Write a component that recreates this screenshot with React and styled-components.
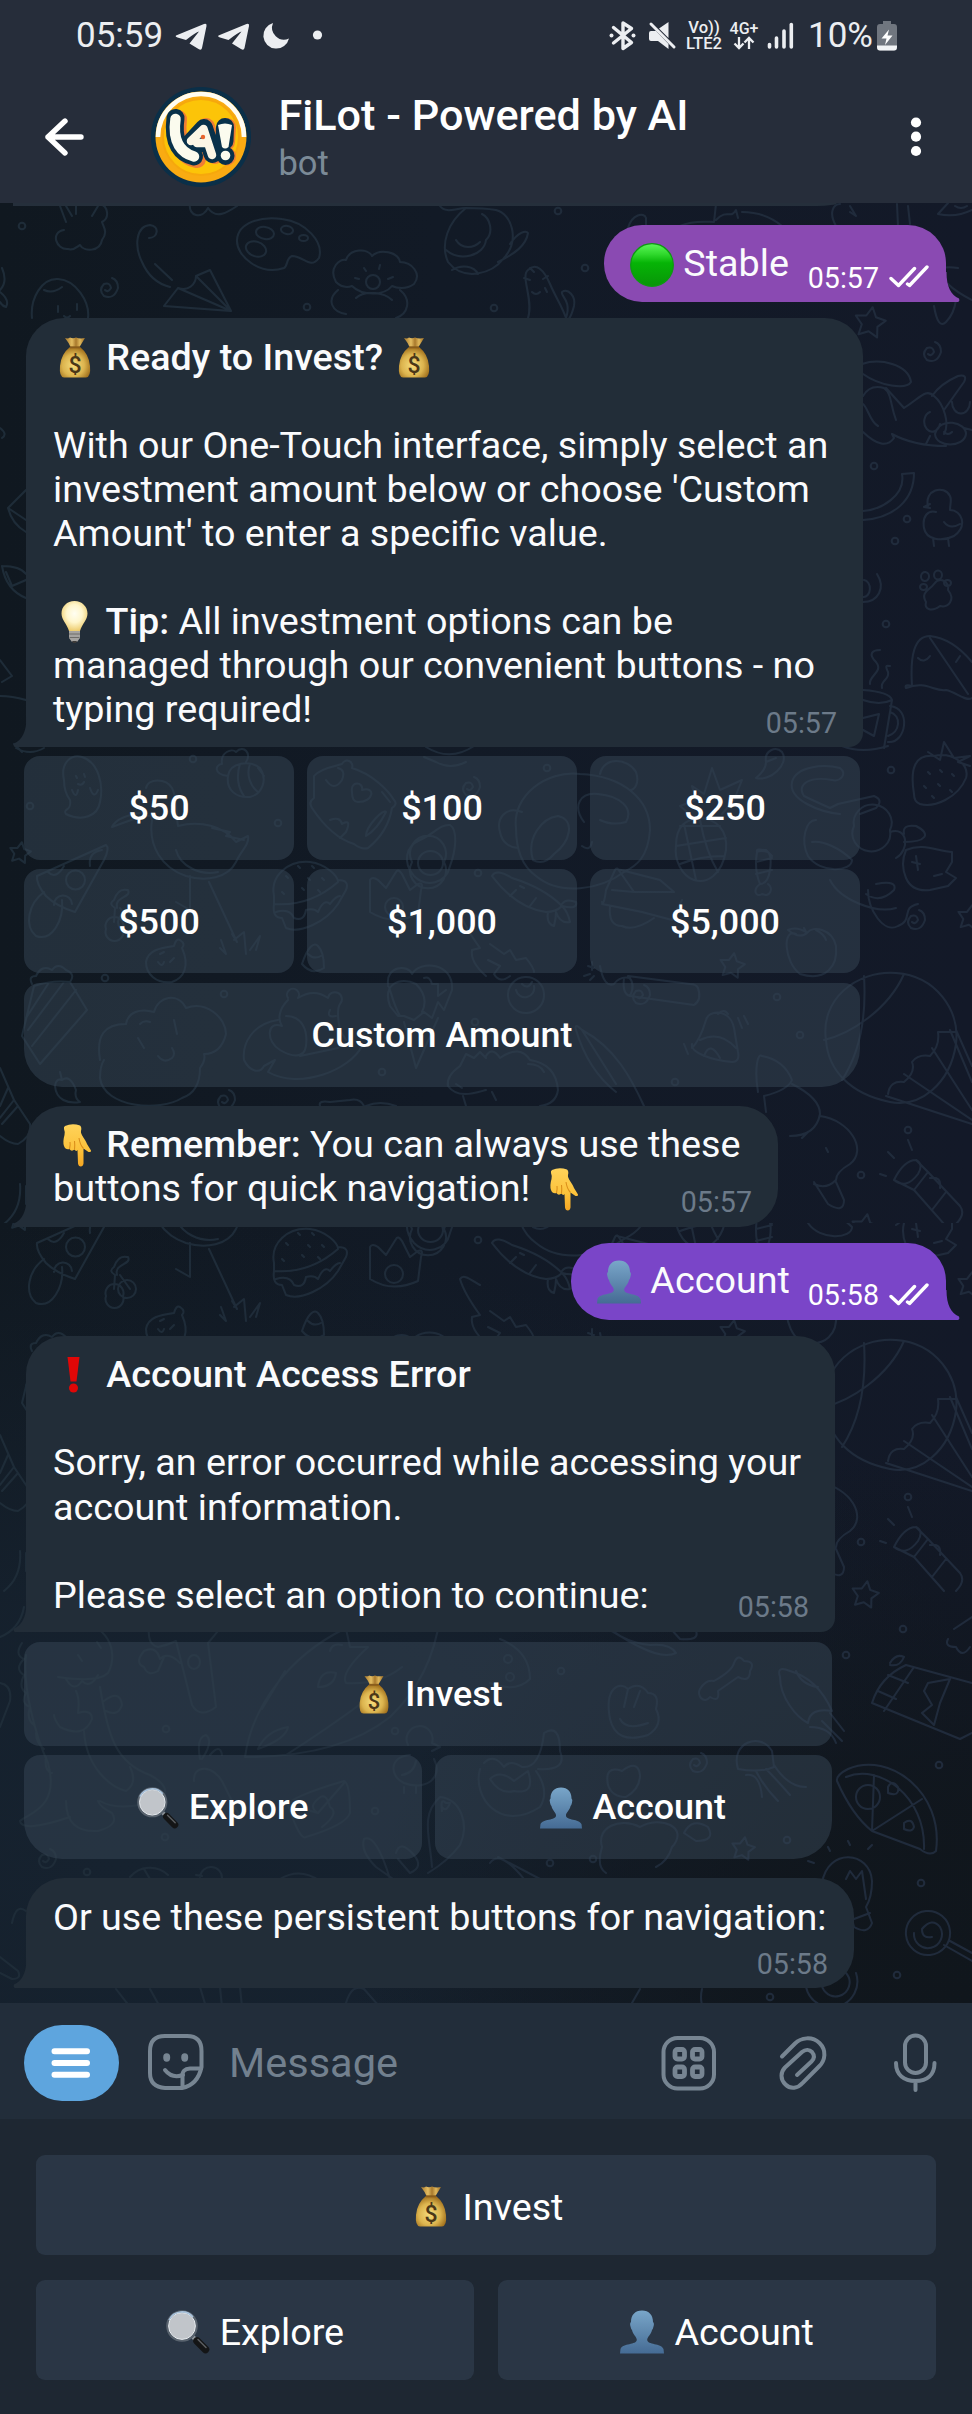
import React from 'react';
import styled, { createGlobalStyle, css } from 'styled-components';

const GlobalStyle = createGlobalStyle`
  * { box-sizing: border-box; }
  body { margin: 0; background: #1e2732; }
  svg { display: block; flex: none; }
`;

const Screen = styled.div`
  width: 972px;
  height: 2414px;
  display: flex;
  flex-direction: column;
  overflow: hidden;
  font-family: Roboto, 'Liberation Sans', sans-serif;
  color: #fafbfd;
`;

/* ---------- top ---------- */

const TopArea = styled.header`
  height: 203px;
  flex: none;
  background: #262d3a;
`;

const StatusBar = styled.div`
  height: 71px;
  padding: 0 75px 0 76px;
  display: flex;
  align-items: center;
  justify-content: space-between;
  color: #eceef1;
`;

const StatusGroup = styled.div`
  display: flex;
  align-items: center;
`;

const StatusText = styled.span`
  font-size: 35px;
  line-height: 41px;
  margin-right: ${(p) => p.$after || 0}px;
  white-space: nowrap;
`;

const StackedLabel = styled.span`
  display: flex;
  flex-direction: column;
  align-items: center;
  width: ${(p) => p.$w}px;
  margin-right: ${(p) => p.$after}px;
  font-size: ${(p) => p.$size}px;
  line-height: 15.5px;
  font-weight: 500;
  white-space: nowrap;
`;

const TitleBar = styled.div`
  height: 131px;
  display: flex;
  align-items: center;
  padding: 0 50px 0 44px;
`;

const TitleText = styled.div`
  flex: 1;
  margin-left: 27.5px;
`;

const Title = styled.div`
  font-size: 43.2px;
  font-weight: 500;
  line-height: 50px;
  color: #fff;
`;

const Subtitle = styled.div`
  font-size: 34.5px;
  line-height: 40px;
  margin-top: 2px;
  color: #7b8a97;
`;

/* ---------- chat ---------- */

const Chat = styled.main`
  position: relative;
  height: 1800px;
  flex: none;
  display: flex;
  flex-direction: column;
  align-items: flex-start;
  padding: 22px 26px 0 24px;
  overflow: hidden;
  background: radial-gradient(ellipse 620px 560px at 100% 100%, #10161c 0%, rgba(16, 22, 28, 0.9) 35%, rgba(16, 22, 28, 0) 100%),
    radial-gradient(ellipse 900px 640px at 12% 92%, #16222f 0%, rgba(22, 34, 47, 0.85) 40%, rgba(22, 34, 47, 0) 100%),
    linear-gradient(90deg, #101820 0%, #121a26 45%, #131928 100%);
`;

const Wallpaper = styled.svg`
  position: absolute;
  inset: 0;
`;

const HeaderEdge = styled.div`
  position: absolute;
  top: 0;
  left: 13px;
  width: 824px;
  height: 3px;
  background: #252f3b;
  border-bottom-right-radius: 20px 3px;
`;

const Bubble = styled.div`
  position: relative;
  flex: none;
  width: ${(p) => p.$w}px;
  height: ${(p) => p.$h}px;
  margin: 0 0 ${(p) => p.$after}px 2px;
  padding: 16.5px 27px 0 27px;
  border-radius: 38px 38px ${(p) => p.$corner || 38}px 0;
  background: #222d38;
`;

const SentBubble = styled(Bubble)`
  align-self: flex-end;
  display: flex;
  border-radius: 38px 38px 0 38px;
  padding: 15.5px 17px 0 26px;
  background: ${(p) => p.$color};
`;

const TailSvg = styled.svg`
  position: absolute;
  bottom: 0;
  ${(p) => (p.$right ? css`left: calc(100% - 0.5px);` : css`right: calc(100% - 0.5px); transform: scaleX(-1);`)}
`;

const Line = styled.div`
  height: 44.08px;
  font-size: 37.7px;
  line-height: 44.08px;
  white-space: pre;
  b { font-weight: 500; }
`;

const InlineEmoji = styled.span`
  display: inline-block;
  width: 44px;
  height: 44px;
  vertical-align: ${(p) => p.$drop || -10}px;
`;

const Stamp = styled.time`
  position: absolute;
  right: ${(p) => p.$right}px;
  bottom: 7.5px;
  font-size: 28.6px;
  line-height: 34px;
  color: ${(p) => p.$color || '#6c7a89'};
`;

const Ticks = styled.svg`
  position: absolute;
  right: 17px;
  bottom: 14px;
`;

const Keyboard = styled.div`
  position: relative;
  flex: none;
  width: ${(p) => p.$w}px;
  margin-bottom: ${(p) => p.$after}px;
  display: flex;
  flex-direction: column;
  gap: 9.4px;
`;

const KeyRow = styled.div`
  display: flex;
  gap: 13px;
`;

const Key = styled.button`
  flex: 1;
  height: 104px;
  display: flex;
  align-items: center;
  justify-content: center;
  gap: 10px;
  padding: 1.5px 0 0;
  border: 0;
  border-radius: 16px 16px ${(p) => (p.$endRight ? 38 : 16)}px ${(p) => (p.$endLeft ? 38 : 16)}px;
  background: rgba(53, 69, 84, 0.52);
  color: #fff;
  font: 500 35.9px/41px Roboto, sans-serif;
`;

/* ---------- bottom ---------- */

const Composer = styled.div`
  height: 116px;
  flex: none;
  display: flex;
  align-items: center;
  padding: 3px 34px 0 24px;
  background: #222d3a;
`;

const MenuButton = styled.button`
  width: 95px;
  height: 76px;
  padding: 0 0 0 27px;
  border: 0;
  border-radius: 38px;
  background: #5ea5de;
`;

const Placeholder = styled.span`
  flex: 1;
  margin-left: 25px;
  font-size: 41.5px;
  line-height: 48px;
  color: #72808e;
`;

const ReplyPanel = styled.div`
  height: 295px;
  flex: none;
  display: flex;
  flex-direction: column;
  gap: 24.5px;
  padding: 36px;
  background: #1e2732;
`;

const ReplyRow = styled.div`
  display: flex;
  gap: 24.5px;
`;

const ReplyKey = styled(Key)`
  height: 100px;
  padding-top: 4px;
  border-radius: 9px;
  background: #2a3645;
  font-weight: 400;
  font-size: 37.7px;
  line-height: 44px;
`;

/* ---------- emoji drawings (44 x 44) ---------- */

const Bag = ({ size = 44 }) => (
  <svg width={size} height={size} viewBox="0 0 44 44">
    <defs>
      <radialGradient id="bagFill" cx="45%" cy="60%" r="60%">
        <stop offset="0" stopColor="#f6dc7b" />
        <stop offset=".6" stopColor="#dcb44e" />
        <stop offset="1" stopColor="#a06f1c" />
      </radialGradient>
      <linearGradient id="bagNeck" x1="0" x2="1" y1="0" y2="0">
        <stop offset="0" stopColor="#a9792c" />
        <stop offset=".35" stopColor="#e3bd62" />
        <stop offset=".55" stopColor="#a9792c" />
        <stop offset=".75" stopColor="#e0b85c" />
        <stop offset="1" stopColor="#9a6a22" />
      </linearGradient>
    </defs>
    <path d="M12 2 Q15 3 17 1.5 Q20 3 23 1.500 Q27 3 32 2 Q29 7 26.500 11 L17.500 11 Q16 7 12 2Z" fill="url(#bagNeck)" />
    <path d="M17 11 H27 Q36 18 37 30 Q38 41 33 41.500 H11 Q6 41 7 30 Q8 18 17 11Z" fill="url(#bagFill)" />
    <path d="M17 11.300 H27" stroke="#8a5d1c" strokeWidth="2" />
    <text x="22" y="36.500" fontSize="23" fontWeight="500" textAnchor="middle" fill="#4a3718" fontFamily="Roboto, sans-serif">$</text>
  </svg>
);

const Bulb = () => (
  <svg width="44" height="44" viewBox="0 0 44 44">
    <defs>
      <radialGradient id="bulbFill" cx="50%" cy="42%" r="60%">
        <stop offset="0" stopColor="#fffef2" />
        <stop offset=".5" stopColor="#fff6cc" />
        <stop offset="1" stopColor="#ecc968" />
      </radialGradient>
    </defs>
    <path d="M21.500 1 C29 1 34.500 6.500 34.500 13.500 C34.500 20 29 24 27 31 H16 C14 24 8.500 20 8.500 13.500 C8.500 6.500 14 1 21.500 1Z" fill="url(#bulbFill)" />
    <path d="M16 31 H27 V38 L24 42 H19 L16 38Z" fill="#a5a3a0" />
    <path d="M16 34 H27 M16.500 37.500 H26.500" stroke="#6e6c69" strokeWidth="1" />
    <path d="M19 41 H24 L23 43 H20Z" fill="#3c3a38" />
  </svg>
);

const HandDown = () => (
  <svg width="44" height="44" viewBox="0 0 44 44">
    <defs>
      <linearGradient id="handFill" x1="0" x2="0" y1="0" y2="1">
        <stop offset="0" stopColor="#ffd35a" />
        <stop offset=".6" stopColor="#fcc23b" />
        <stop offset="1" stopColor="#f5a623" />
      </linearGradient>
    </defs>
    <path d="M12 3 Q19 0 27 2.500 Q29 4 28 8 C27 11 33 17 34 21 L38 27.500 Q38.500 29.500 35.500 29 L30.500 25.500 V40.500 Q30 43.500 27.800 43.500 Q25.500 43.500 25 40.500 L24.500 27 Q23 29 21.500 26.500 Q18.500 29 16.500 26 Q12.500 27 11 23 Q9.500 19 11.500 12 Q12 8 11 6 Q10.500 4 12 3Z" fill="url(#handFill)" />
    <path d="M16.500 26 Q17.500 22 17 19 M21.500 26.500 Q22 22 21.500 18 M30.500 25.500 Q27 22 26 15" fill="none" stroke="#db8f1b" strokeWidth="1.100" />
  </svg>
);

const Exclamation = () => (
  <svg width="44" height="44" viewBox="0 0 44 44">
    <path d="M14.500 4 H26.500 L23.500 28.500 H17.500Z" fill="#e00707" />
    <circle cx="20.500" cy="35" r="4.500" fill="#e00707" />
  </svg>
);

const Person = ({ size = 44 }) => (
  <svg width={size} height={size} viewBox="0 0 44 44">
    <defs>
      <linearGradient id="personFill" x1="0" x2="0" y1="0" y2="1">
        <stop offset="0" stopColor="#79a6c9" />
        <stop offset="1" stopColor="#456b94" />
      </linearGradient>
    </defs>
    <path d="M22 .5 C29 .5 33 5 33 12 Q34.500 13 33.500 16.500 Q33 19 32 20 C31 25 27 27 27.200 30 C27.500 35 41 33 43.500 39 L44 43.500 H0 L.5 39 C3 33 16.500 35 16.800 30 C17 27 13 25 12 20 Q11 19 10.500 16.500 Q9.500 13 11 12 C11 5 15 .5 22 .5Z" fill="url(#personFill)" />
  </svg>
);

const Magnifier = ({ size = 44 }) => (
  <svg width={size} height={size} viewBox="0 0 44 44">
    <path d="M27 27 L31 31" stroke="#8d949b" strokeWidth="4" />
    <path d="M31 31 L39.500 39.500" stroke="#141516" strokeWidth="7.500" strokeLinecap="round" />
    <path d="M32 29.500 L40 37.500" stroke="#5b5e61" strokeWidth="1.500" strokeLinecap="round" />
    <circle cx="16" cy="16" r="14.500" fill="#c1c5ca" stroke="#59636e" strokeWidth="2.600" />
    <circle cx="16" cy="16" r="13.400" fill="none" stroke="#e9edf0" strokeWidth="1" />
    <path d="M3 10 A14.500 14.500 0 0 1 27 7" fill="none" stroke="#a9c3dc" strokeWidth="1.600" />
  </svg>
);

const GreenCircle = () => (
  <svg width="44" height="44" viewBox="0 0 44 44">
    <defs>
      <linearGradient id="greenFill" x1="0" x2="0" y1="0" y2="1">
        <stop offset="0" stopColor="#5df75a" />
        <stop offset=".25" stopColor="#2fd82c" />
        <stop offset=".45" stopColor="#06b406" />
        <stop offset="1" stopColor="#089508" />
      </linearGradient>
    </defs>
    <circle cx="22" cy="22" r="21.300" fill="url(#greenFill)" stroke="#0d9a12" strokeWidth="1.300" />
  </svg>
);

/* ---------- interface drawings ---------- */

const StatusLeftIcons = () => (
  <svg width="150" height="34" viewBox="174 19 150 34" fill="#eceef1">
    <path id="plane" d="M176 35.500 L204 24 Q207 23 206.500 26 L202 48 Q201.300 51 198.500 49 L189.500 43.500 L199 31.500 Q196 32 186 40 L177.500 37.500 Q175 36.800 176 35.500Z" />
    <use href="#plane" x="42.500" />
    <path d="M273 23 A13 13 0 1 0 289 38.500 A12 12 0 0 1 273 23Z" />
    <circle cx="317.500" cy="35" r="4.600" />
  </svg>
);

const BluetoothMute = () => (
  <svg width="76" height="34" viewBox="608 19 76 34">
    <g fill="none" stroke="#eceef1" strokeWidth="3.400" strokeLinejoin="round" strokeLinecap="round">
      <path d="M613.500 27.500 L631.500 42.500 L623 48.500 V23 L631.500 28.500 L613.500 43" />
    </g>
    <circle cx="611.500" cy="35.500" r="2" fill="#eceef1" />
    <circle cx="633.500" cy="35.500" r="2" fill="#eceef1" />
    <path d="M659 28.500 L668.500 22 V38Z M651 31 H656 L668.500 44 V49 L658 41 H651 Q649 41 649 39 V33 Q649 31 651 31Z" fill="#eceef1" />
    <path d="M651 24 L674 47" stroke="#eceef1" strokeWidth="3" strokeLinecap="round" />
  </svg>
);

const DataArrows = () => (
  <svg width="22" height="14" viewBox="0 0 22 14" fill="none" stroke="#eceef1" strokeWidth="2.300">
    <path d="M6 1 V12 M1.500 7.500 L6 12 L10.500 7.500 M16 13 V2 M11.500 6.500 L16 2 L20.500 6.500" />
  </svg>
);

const SignalBars = () => (
  <svg width="41" height="34" viewBox="768 19 41 34" stroke="#eceef1" strokeWidth="3.600" strokeLinecap="round">
    <path d="M770.500 44.500 V47 M777.500 38 V47 M785 31 V47" />
    <path d="M792.300 24.500 V47" />
  </svg>
);

const Battery = () => (
  <svg width="20" height="30" viewBox="0 0 20 30">
    <path d="M6 0 H14 V3 H17 Q20 3 20 6 V26 Q20 29.500 17 29.500 H3 Q0 29.500 0 26 V6 Q0 3 3 3 H6Z" fill="#70767f" />
    <path d="M0 24.500 H20 V26 Q20 29.500 17 29.500 H3 Q0 29.500 0 26Z" fill="#f2f4f6" />
    <path d="M12 8.500 L4.500 17.500 H9.500 L8 24 L15.500 14.500 H10.500Z" fill="#fff" />
  </svg>
);

const BackArrow = () => (
  <svg width="41" height="40" viewBox="0 0 41 40" fill="none" stroke="#fff" strokeWidth="5.4" strokeLinecap="round" strokeLinejoin="round">
    <path d="M37 20 H4 M21 4 L4 20 L21 36" />
  </svg>
);

const Avatar = () => (
  <svg width="100" height="100" viewBox="0 0 100 100" style={{ marginLeft: 66 }}>
    <circle cx="50" cy="50" r="50" fill="#0a2f48" />
    <circle cx="50" cy="50" r="45.500" fill="#f9ab12" />
    <circle cx="50" cy="50" r="38" fill="#fcc408" stroke="#f6a80c" strokeWidth="2" />
    <path d="M7 50 A43 43 0 0 1 93 50" fill="none" stroke="#fffdf2" strokeWidth="4.600" />
    <g fill="none" strokeLinecap="round" strokeLinejoin="round">
      <path d="M27 32 C24 58 34 70 46 72 M43 54 L55 40 L64 68 M76 40 L75 55 M76 69 V69.500" stroke="#ef7d35" strokeWidth="18" />
      <path d="M24.500 31 C21 57 31 67 43 69.500 M41 54 L53 41 L61.500 67 M46 56 H56 M74 40 L73.500 54 M74.500 68.500 V69" stroke="#08314a" strokeWidth="18" />
      <path d="M24.500 32 C21 56 31 66 43 69.500" stroke="#fbfbee" strokeWidth="10.500" />
      <path d="M40 54 L52.500 42 L61 68 M46 56 H56" stroke="#fbf6e6" strokeWidth="8.500" />
    </g>
    <path d="M67 38 Q74 35 81 38 L77.500 60 Q74 63 71 60Z" fill="#fbfbee" />
    <circle cx="74.500" cy="68.500" r="4.800" fill="#fbfbee" />
    <circle cx="52" cy="50" r="2.200" fill="#e8632c" />
  </svg>
);

const MoreDots = () => (
  <svg width="12" height="42" viewBox="0 0 12 42" fill="#fff">
    <circle cx="6" cy="6.500" r="5.100" />
    <circle cx="6" cy="20.700" r="5.100" />
    <circle cx="6" cy="35" r="5.100" />
  </svg>
);

const Hamburger = () => (
  <svg width="40" height="32" viewBox="0 0 40 32" stroke="#fff" strokeWidth="6" strokeLinecap="round">
    <path d="M3.500 4.200 H36 M3.500 16 H36 M3.500 27.800 H36" />
  </svg>
);

const StickerIcon = () => (
  <svg width="56" height="57" viewBox="0 0 56 57" fill="none" stroke="#778592" strokeWidth="4" strokeLinecap="round" style={{ marginLeft: 29 }}>
    <path d="M34 54 H17 Q2 53 2 39 V17 Q2 2 17 2 H39 Q53.500 2 53.500 17 V33 C51 45 44 52 34 54Z" strokeLinejoin="round" />
    <path d="M53 34.500 H42 Q34 35 34.500 42 V53" />
    <path d="M17 36 Q24 45 35 41" />
    <ellipse cx="18.700" cy="23.500" rx="1.500" ry="2.200" />
    <ellipse cx="36.700" cy="23.500" rx="1.500" ry="2.200" />
  </svg>
);

const ComposerIcons = () => (
  <svg width="277" height="60" viewBox="661 2033 277 60" fill="none" stroke="#778592" strokeWidth="4" strokeLinecap="round">
    <rect x="663.500" y="2038" width="50.500" height="50.500" rx="14" />
    <g strokeWidth="4.800">
      <rect x="675" y="2049.500" width="9.500" height="9.500" rx="2.500" />
      <rect x="692.500" y="2049.500" width="9.500" height="9.500" rx="2.500" />
      <rect x="675" y="2067" width="9.500" height="9.500" rx="2.500" />
      <rect x="692.500" y="2067" width="9.500" height="9.500" rx="2.500" />
    </g>
    <path d="M782 2056.500 L795 2043.500 C801 2037.500 812 2036 819.500 2043 C827 2050.500 825 2060.500 819.500 2066 L802.500 2083 C798 2088.500 790.500 2089.500 785.500 2084.500 C780 2079 780.500 2072 785 2067.500 L802 2052 C805.500 2049 809.500 2049.500 812 2052 C814.500 2055 814.500 2058.500 811.500 2061.500 L797 2075" />
    <rect x="905" y="2035.500" width="21" height="37.500" rx="10.500" />
    <path d="M896 2063 C896 2075 904 2081 915.500 2081 C927 2081 934.500 2075 934.500 2063 M915.500 2082 V2090" />
  </svg>
);

const Tail = ({ color = '#222d38', right }) => (
  <TailSvg $right={right} width="14" height="30" viewBox="0 0 14 30">
    <path d="M0 0 H.5 C.5 15 5 23 13 26.500 Q14 29.500 12 30 H0Z" fill={color} />
  </TailSvg>
);

const DoubleTick = () => (
  <Ticks width="40" height="23" viewBox="0 0 40 23" fill="none" stroke="#fff" strokeWidth="3.400" strokeLinecap="round" strokeLinejoin="round">
    <path d="M2 13.500 L9.500 20.500 L25.500 3.500" />
    <path d="M18.500 19 L20.500 20.500 L38 2" />
  </Ticks>
);

/* ---------- wallpaper ---------- */

const spirals = [[108, 288], [931, 352], [915, 920], [640, 995], [225, 1100], [470, 787], [697, 1396], [46, 1492]];
const rings = [[22, 226], [307, 307], [558, 211], [585, 268], [494, 308], [874, 466], [907, 519], [895, 541], [886, 624], [193, 759], [30, 806], [278, 823], [547, 768], [891, 770], [105, 978], [224, 994], [382, 1072], [777, 997], [800, 1035], [675, 1082], [908, 1130], [861, 1175], [478, 873], [475, 1022], [166, 1362], [395, 1364], [165, 1470], [87, 1505], [561, 1304], [903, 1262], [846, 1288], [939, 1398], [921, 1516], [897, 1608], [770, 1630], [593, 1492], [550, 1496], [787, 1473], [375, 1444]];
const stars = [[870, 323, 16], [20, 853, 11], [732, 966, 13], [970, 918, 13], [865, 1228, 14], [743, 1482, 12]];

const starPath = (x, y, r) => {
  const pts = [];
  for (let i = 0; i < 10; i += 1) {
    const a = (Math.PI / 5) * i - 1.4;
    const k = i % 2 ? r * 0.52 : r;
    pts.push(`${(x + k * Math.cos(a)).toFixed(1)} ${(y + k * Math.sin(a)).toFixed(1)}`);
  }
  return `M${pts.join('L')}Z`;
};

const doodles = [
  // cauliflower, plum stem, palette
  'M64 230 C50 232 56 250 68 249 C74 251 78 246 80 245 C84 252 100 252 102 240 C108 232 104 228 102 222 C110 218 108 206 100 204 M60 206 L66 222 M66 206 L72 216 M76 204 L76 214 M98 206 L92 216',
  'M149 238 C158 238 160 226 150 225 C136 226 134 246 142 262 C148 276 158 284 170 287 M155 264 L172 280 M190 204 C188 216 202 220 208 208 C216 220 228 212 237 206',
  'M284 268 C260 276 236 256 237 240 C238 222 262 216 282 219 C306 222 324 242 319 258 C310 270 304 256 292 256 C286 258 288 266 284 268Z M256 232 A9 6 10 1 0 274 234 A9 6 10 1 0 256 232 M281 229 A6 4 10 1 0 293 231 A6 4 10 1 0 281 229 M299 238 A4.500 3 0 1 0 308 238 A4.500 3 0 1 0 299 238 M246 246 A10 7 20 1 0 266 252 A10 7 20 1 0 246 246',
  'M164 306 L178 288 C188 292 196 284 196 276 L210 270 L231 311 L164 306 M178 288 L231 311 L196 276',
  'M336 282 C328 268 340 258 346 260 C350 248 368 248 372 256 C380 248 398 252 400 262 C412 262 422 274 414 284 C406 290 396 288 392 286 C384 296 362 296 352 286 C346 288 340 286 336 282Z M366 282 A7 7 0 1 0 380 282 A7 7 0 1 0 366 282 M338 290 C326 300 332 312 346 314 M400 290 C412 300 408 314 396 318 M364 268 L366 271 M380 265 L379 269 M355 278 L359 279 M388 279 L393 277 M356 298 C364 290 384 292 392 300',
  'M32 318 C30 298 42 278 58 279 C76 280 90 302 88 318 M44 290 C52 294 58 290 62 287 M58 306 V312 M77 304 V310 M64 316 Q67 319 70 316 M2 268 Q8 282 0 290 M0 292 Q10 300 6 307 Q2 306 0 302',
  'M440 206 C446 214 456 208 466 208 C448 222 440 244 448 262 C464 282 492 274 504 258 C520 240 512 214 496 210 C484 208 474 208 466 208 M446 250 C460 262 484 256 486 240 C494 232 490 218 482 214 M456 240 C462 250 474 248 480 242 M452 270 C462 264 474 266 478 274 M510 244 C518 232 526 230 528 233 C526 246 514 254 498 262',
  'M528 318 C534 300 520 276 528 270 C536 262 544 270 550 284 C556 298 562 306 566 318 M566 318 C572 300 560 296 562 292 C568 288 576 296 574 306 C572 314 570 318 568 320 M524 278 L530 280 M530 268 L534 272 M548 276 L543 279 M532 292 Q536 296 540 292 M545 288 L547 292',
  'M628 228 C632 214 644 212 646 218 L646 226 M680 226 C694 220 706 222 714 222 L716 204 M716 220 C728 208 730 220 736 210 L738 218 M742 212 C756 212 770 216 782 226 M836 226 C828 212 834 204 840 204 M897 204 L898 226 M908 206 L910 224 M850 206 L856 216 L850 212 M938 214 L948 203 M938 214 Q956 218 972 210 M955 206 Q961 210 967 206',
  'M958 268 C944 266 936 268 930 278 Q936 288 950 300 M948 284 Q956 292 972 300 M934 306 Q938 330 946 322 Q954 314 956 300',
  'M862 364 C880 358 908 364 911 382 C906 390 880 386 863 374 M863 396 Q870 384 884 388 C892 394 890 404 896 420 M863 404 C868 408 870 422 878 426 M886 388 L904 408 M904 408 C920 398 926 388 934 396 C944 404 950 424 944 434 M863 432 Q884 452 894 438 L892 434 Q914 446 946 446 M932 396 Q940 384 958 376 Q968 374 964 382 L944 410 M930 412 A8 10 0 1 0 940 424 M952 402 A7 9 0 1 0 970 402 M935 434 C940 416 966 422 966 434 C964 448 936 448 935 434Z M944 432 Q948 436 952 432 M930 436 L926 444 M964 428 L972 430',
  'M902 474 L914 473 C914 500 894 518 863 520 M902 474 C906 496 880 510 863 511',
  'M928 506 C924 490 944 484 950 496 C952 500 950 504 950 510 C962 510 968 526 954 536 C942 542 926 540 924 528 C922 516 928 510 936 512 M930 504 L924 507 L930 508 M944 522 Q950 530 960 524 M933 538 L934 546 M948 538 L949 546',
  'M926 602 C920 592 930 590 934 584 C940 576 950 582 948 590 C956 600 948 608 940 606 C932 612 924 610 926 602Z M920 587 A3.500 3 0 1 0 927 587 A3.500 3 0 1 0 920 587 M921 576 A4 4.500 0 1 0 929 577 A4 4.500 0 1 0 921 576 M934 575 A4 4.500 0 1 0 942 575 A4 4.500 0 1 0 934 575 M944 583 A3.500 3 0 1 0 951 583 A3.500 3 0 1 0 944 583',
  'M863 597 A6 8 0 1 0 864 580 M863 602 C878 602 886 588 877 574',
  'M912 686 C910 656 914 636 930 636 C948 638 962 650 972 662 M912 686 Q904 684 906 688 C926 680 934 692 946 690 C956 692 966 702 972 698 M930 638 L968 694 M918 658 Q924 664 930 656 M960 656 L956 662',
  'M870 684 C868 676 884 672 876 662 C868 654 872 650 880 650 M882 688 C880 680 890 680 888 672 C884 664 888 666 890 666 M863 690 Q890 692 892 700 Q880 706 863 700 M892 700 L884 748 M890 706 C912 708 906 744 888 742 M890 712 C902 716 900 732 888 736 M863 718 L879 714 L874 736 L863 730',
  'M0 428 Q8 434 2 438 M26 490 L8 508 Q12 524 26 532 M8 508 L26 520 M2 566 Q20 566 26 574 M2 566 Q6 590 26 598 M6 572 L12 586 L26 580 M0 660 L12 676 L2 682 M0 696 Q12 696 26 700',
  'M16 748 Q30 756 44 748 M14 744 L22 752',
  // ghost, bee, goose
  'M64 780 C60 762 72 754 82 757 C98 762 104 784 100 802 C98 816 82 822 66 814 C62 808 72 812 70 800 Q64 792 64 780 M72 790 Q76 800 78 790 M90 788 Q94 800 98 790 M76 776 L77 778 M84 774 L85 777 M78 784 Q82 786 84 782',
  'M228 776 C212 774 216 764 222 764 C220 752 232 748 236 752 C244 744 252 754 246 762 M228 776 C230 762 250 760 260 768 C268 780 262 794 250 797 C236 798 226 790 228 776 M240 764 C236 776 238 788 244 796 M250 764 C246 774 250 786 258 792 M258 768 L264 776',
  'M146 788 C148 778 166 778 172 788 C178 800 176 816 178 826 C200 820 224 826 236 842 L248 836 C250 844 240 852 236 862 C228 878 206 882 186 876 C162 868 148 846 152 820 C150 812 148 818 142 816 L112 827 C116 818 130 814 146 812 M176 850 C180 866 200 876 218 872 M212 828 L230 832 L226 836 L244 840 M190 876 L190 910 L176 902 M209 882 L237 942 L232 934 M221 940 L226 954 L220 948 M234 940 L244 932 L246 954 M250 950 L260 936 L256 950',
  'M314 776 C320 768 336 766 342 764 A5 5 0 1 1 352 768 C372 774 388 790 394 800 Q398 804 392 808 Q388 832 368 848 Q362 850 354 844 C334 838 320 820 312 808 Q308 802 314 798Z M326 780 Q334 792 342 780 Q346 770 338 768 M352 792 C350 780 364 782 362 790 C376 786 374 802 358 802 Q352 802 352 792 M330 820 Q340 816 342 824 Q352 818 346 832 L340 838 M366 836 C366 826 384 808 386 812 C382 820 376 830 366 836 M382 792 L390 802',
  'M450 825 C458 830 456 850 450 866 C446 884 426 888 414 876 C402 862 406 846 420 840 C434 834 440 824 450 825 M412 862 A18 18 0 1 0 444 862 A18 18 0 1 0 412 862 M418 863 A12.500 12 0 1 0 443 863 A12.500 12 0 1 0 418 863',
  'M426 747 Q450 762 474 746 M424 757 L436 762 Q450 770 466 762',
  // panda, pineapple, sweet
  'M516 828 C512 796 546 770 580 774 C624 776 650 800 650 830 C648 858 636 866 624 872 C600 890 560 896 536 876 C522 866 516 848 516 828Z M522 812 C506 806 496 818 500 832 C502 844 512 848 518 848 M600 774 C604 756 628 758 636 772 C640 784 634 790 630 790 M533 860 C526 838 542 818 558 816 C576 820 570 842 554 854 Q544 866 533 860 M584 822 C572 806 580 792 598 794 C620 796 634 808 626 822 Q612 826 600 820 M582 846 Q590 852 592 842',
  'M676 846 C676 820 692 820 698 818 C716 818 728 830 726 850 C722 876 706 884 694 880 C682 876 674 860 676 846Z M680 826 L720 826 M676 846 L726 838 M680 864 Q700 856 724 856 M684 824 L696 880 M700 820 Q706 852 718 872 M692 816 L680 806 L696 800 L692 786 L704 794 L712 768 L720 790 L742 780 L734 800 L722 814',
  'M757 852 Q754 870 760 884 Q768 884 770 870 Q772 856 768 852 Q760 850 757 852 M756 862 L772 858 M756 874 L772 870 M757 852 C756 848 760 850 766 850 L772 856 M760 884 C752 890 756 898 762 894 C770 898 774 888 768 884',
  'M756 778 C770 782 790 764 782 752 C776 746 764 750 766 762 Q766 770 756 778 M766 762 L776 758',
  'M888 746 Q862 754 842 746',
  // cat
  'M840 814 C820 812 788 800 792 782 C796 766 824 764 840 768 C848 774 840 782 832 780 C810 776 796 784 804 796 Q812 800 830 808 L838 804 M816 820 C806 820 800 840 808 856 C820 874 852 872 852 860 C840 848 822 840 812 842 M838 804 L874 796 Q884 800 876 808 L860 814 M854 826 A19 18 0 1 0 890 830 A19 18 0 1 0 854 826 M890 832 C908 826 910 850 896 858 M904 834 Q902 824 916 826 C932 834 926 842 904 842 M906 850 C924 842 938 852 952 852 L952 862 L946 872 L956 878 L948 886 L930 890 Q912 892 906 878 Q900 864 906 850 M912 862 L920 864 M916 856 L918 870 M934 876 L942 874 M868 890 C868 910 884 934 898 926 C914 920 900 908 918 904 M830 880 C840 900 876 914 896 908 M866 894 Q880 904 894 890 Q898 880 876 884',
  'M914 794 C910 770 914 754 934 756 C952 752 970 764 966 778 C958 798 934 808 920 804 Q914 802 914 794 M928 752 L940 760 L944 742 L954 758 L970 756 L958 762 L970 766 M928 772 L930 774 M940 770 L942 772 M952 774 L954 776 M924 786 L926 788 M938 784 L940 786 M950 790 L952 792 M932 796 L934 798',
  // pizza, cherries, burger, crown
  'M37 876 L106 845 Q110 848 104 860 L75 912 Q56 906 46 896 Q36 884 37 876Z M66 880 A9.500 9.500 0 1 0 85 880 A9.500 9.500 0 1 0 66 880 M54 905 A9 9 0 1 1 72 904 M48 872 Q56 880 64 866 M90 866 Q88 852 102 850 M44 892 C28 904 24 926 36 936 C52 942 64 920 62 900',
  'M106 929 A9 9 0 1 0 123 929 A9 9 0 1 0 106 929 M118 922 A9 9 0 1 0 136 922 A9 9 0 1 0 118 922 M114 922 L115 908 Q108 904 114 900 Q118 888 127 890 M117 908 C114 896 132 898 128 890 M120 908 L130 922',
  'M274 896 C270 876 288 860 310 862 C326 864 338 876 338 882 C322 896 300 906 274 904Z M338 880 Q350 880 346 890 L338 904 C326 922 300 934 286 928 L282 918 Q272 918 274 904 M276 912 Q290 908 294 918 Q304 922 306 910 Q314 908 318 912 Q324 898 330 904 Q336 896 340 896 M298 866 L300 868 M312 866 L314 868 M286 876 L288 878 M308 878 L310 880 M322 878 L324 880 M282 892 L284 894 M302 888 L304 890 M318 890 L320 892',
  'M370 880 Q372 876 378 880 L386 888 L396 872 Q398 868 402 874 L410 890 L418 884 Q424 882 421 890 L418 914 Q392 926 370 912Z M385 907 A9 9 0 1 0 403 907 A9 9 0 1 0 385 907',
  'M460 912 C464 906 472 914 480 918 M460 912 Q464 926 480 948 L472 950 Q470 962 486 976',
  'M146 962 C148 950 160 948 174 946 Q176 938 180 940 Q186 944 182 948 C190 966 184 978 172 982 C156 984 146 974 146 962 M160 954 L164 952 M170 962 L174 958 M158 962 Q162 968 164 962',
  'M302 964 C308 946 314 942 318 946 Q324 952 324 968 Q312 976 302 964 M308 954 Q314 960 321 956',
  'M492 876 Q496 868 512 878 Q544 888 562 906 Q556 912 546 912 Q516 908 492 876 M510 896 L516 890 M530 906 L536 898 M520 886 L524 888 M548 912 Q546 924 554 926 Q556 918 556 912 Q560 924 570 922 Q568 912 562 906 Q578 910 576 902 Q566 898 562 904 M490 944 L504 954 L510 950 L516 960 L526 958 Q534 968 534 972',
  'M606 890 L615 870 Q617 866 620 872 L634 892 L612 890 M602 902 Q604 906 606 890 M617 869 L660 880 L674 892 L634 892 M602 904 L642 912 L672 920 L682 900 M610 906 Q608 926 622 926 M622 926 Q634 932 654 918',
  'M796 934 C782 928 784 962 800 974 C826 982 838 966 836 946 C832 928 812 926 808 932 Q800 940 788 930 Q796 926 806 932 L804 928 M826 940 Q824 934 816 930',
  // cupcake, elephant, hamster, ice cream
  'M32 984 Q28 976 36 976 Q42 964 52 970 Q58 962 66 970 Q76 974 70 982 M34 986 Q52 980 70 982 L87 1010 L40 1064 L22 1036Z M64 982 L28 1030 M76 990 L32 1046 M48 984 L26 1018',
  'M100 1060 C96 1036 104 1024 126 1024 C128 1012 140 1008 154 1012 C158 996 178 992 186 1008 C206 1000 226 1018 226 1034 C222 1050 212 1054 204 1054 Q206 1060 200 1068 Q200 1092 182 1098 C160 1112 104 1108 100 1078 Q100 1066 104 1060 M140 1024 Q144 1020 150 1022 M138 1038 L144 1048 M174 1020 L177 1034 M158 1056 Q164 1064 172 1058 Q176 1054 172 1048',
  'M288 998 A6 6 0 1 1 298 998 Q314 988 328 998 A7 7 0 1 1 340 1004 Q336 1010 340 1030 L346 1040 M288 1000 C278 1010 278 1020 282 1026 C266 1020 266 1042 280 1050 C290 1056 304 1060 306 1046 C308 1030 302 1016 286 1016 M300 1056 L338 1048 M278 1020 C252 1024 242 1044 244 1060 C250 1072 260 1074 264 1066 L275 1060 L268 1072 C300 1090 350 1070 362 1046 M330 1010 Q326 1018 336 1016',
  'M400 1016 C392 1002 390 986 388 986 M388 984 C386 966 408 964 412 974 C420 960 454 962 452 990 L444 1010 L438 1002 L432 1018 L424 1012 L414 1020 L404 1016 L398 1016 L390 1006 C382 984 400 976 416 984 C426 994 426 1004 422 1012 M424 978 Q430 976 432 984 L438 984 L438 996 L446 990 M404 1022 L416 1068 L438 1018',
  'M448 1086 Q446 1076 460 1066 L466 1054 L474 1058 L480 1052 L486 1058 M448 1086 C458 1100 478 1092 486 1090 M456 1084 L462 1088 M463 1096 L466 1106',
  'M320 1106 Q318 1100 330 1102 L350 1100 Q360 1098 364 1106 M366 1106 Q380 1100 396 1106 M55 1086 C56 1100 68 1104 80 1102 Q74 1098 76 1090 Q70 1074 62 1080 Q56 1078 55 1086 M62 1080 L60 1072',
  // rose, firecracker, bell, blade
  'M488 960 L500 966 L494 974 Q500 984 510 976 M508 996 A18 18 0 1 1 544 994 A18 18 0 1 1 508 996 M516 990 A9 9 0 1 0 534 986 M522 984 Q528 990 532 982',
  'M600 966 Q604 988 614 984 Q620 976 630 978 M624 978 Q622 994 630 996 L694 1005 Q702 1000 698 988 Q696 984 690 984 L628 976 Q636 984 630 996 M588 966 L594 968 M584 976 L590 974 M592 962 L592 970 M590 980 L594 976',
  'M692 1048 Q700 1040 706 1020 C708 1010 730 1008 734 1028 L738 1052 Q740 1062 732 1062 C710 1060 690 1052 692 1044Z M718 1014 Q724 1008 728 1014 M700 1040 Q720 1030 736 1048 M704 1056 Q710 1040 720 1058 M738 1018 L742 1028 M744 1016 L748 1024 M684 1044 L688 1054',
  'M576 1030 Q574 1022 582 1030 C616 1048 632 1080 644 1106 M576 1030 Q588 1070 616 1092 M582 1030 L616 1084 M486 1056 Q492 1046 500 1058 Q520 1044 530 1060 Q556 1064 558 1090 Q556 1104 540 1106 M528 1064 Q540 1064 544 1072 M492 1092 L496 1100',
  // balloon, tree, flashlight
  'M826 1040 C820 1000 856 970 896 973 C936 976 960 1010 956 1044 C950 1084 920 1108 890 1102 C850 1094 828 1070 826 1040 M864 976 Q868 1040 842 1080 M904 974 C888 1010 850 1034 824 1040 M956 1032 L938 1032 Q940 1046 930 1056 Q918 1054 912 1062 Q916 1072 904 1082 Q890 1080 888 1094 M932 1048 L972 1110 M904 1074 L972 1120 M886 1096 L972 1124 M956 1030 L972 1066 M950 1030 L972 1082',
  'M758 1092 C754 1068 758 1052 762 1056 Q784 1060 792 1080 Q788 1090 764 1096 L766 1112 M792 1084 Q820 1098 820 1114 Q816 1136 790 1136 M820 1116 C850 1120 868 1150 850 1164 Q836 1172 836 1180 Q826 1190 814 1184 M814 1182 L828 1204 Q844 1214 844 1200 L836 1182 M826 1148 L828 1152 M808 1132 L802 1138',
  'M894 1180 Q904 1160 916 1160 L928 1172 L960 1206 Q966 1214 956 1224 M894 1180 L914 1190 L944 1224 M894 1180 Q906 1190 918 1174 Q924 1164 916 1160 M914 1190 L928 1172 M932 1210 L946 1192 M930 1178 Q942 1176 940 1188 M908 1140 L912 1150 M888 1152 L894 1158 M880 1174 L886 1176',
  // toothbrush and leaf edge
  'M0 1068 L14 1100 L30 1124 Q32 1136 18 1144 Q10 1144 0 1136 M14 1100 L0 1118 M18 1106 L2 1124 M8 1088 L0 1106 M20 1184 Q22 1210 4 1224 M26 1186 V1204',
  // dinosaur
  'M30 1262 Q52 1248 74 1256 C106 1254 120 1284 108 1306 Q98 1316 58 1310 M66 1312 Q74 1326 82 1314 Q90 1322 98 1308 M26 1288 C22 1320 36 1370 48 1396 C60 1440 30 1446 20 1454 Q22 1466 70 1450 M76 1324 Q80 1332 78 1346 Q92 1342 92 1352 Q84 1372 60 1360 Q54 1352 54 1348 M100 1320 C108 1370 116 1396 150 1408 Q172 1420 162 1432 Q120 1446 100 1434 M66 1434 Q66 1466 98 1464 Q120 1458 112 1446 Q100 1440 98 1434 M84 1364 C86 1400 110 1420 126 1424 Q138 1416 130 1400 M22 1276 Q14 1288 24 1292 Q14 1302 24 1308 Q18 1320 26 1326 Q20 1336 30 1340 Q26 1352 34 1358 M36 1366 Q36 1376 44 1382 M46 1390 Q44 1404 52 1406 M104 1334 Q120 1322 122 1338 Q118 1350 106 1344',
  'M78 1288 L82 1294 M97 1275 L101 1281',
  'M0 1316 Q12 1318 10 1334 L0 1360 M0 1270 Q20 1262 24 1240',
  'M144 1262 C154 1254 142 1276 158 1280 Q168 1278 176 1274 L192 1338 Q200 1352 216 1340 L208 1276 Q220 1262 224 1256 M188 1295 A6 7 0 1 0 200 1295 A6 7 0 1 0 188 1295 M180 1296 Q168 1284 160 1292 Q156 1278 144 1284 Q134 1296 144 1300 Q148 1310 158 1304 L164 1290',
  'M245 1390 C252 1340 288 1290 344 1262 Q380 1248 440 1250 Q432 1310 390 1350 Q340 1390 245 1390 M258 1382 Q266 1364 288 1360 Q286 1372 258 1382 M318 1320 Q320 1302 336 1306 Q334 1320 318 1320 M330 1284 Q332 1276 342 1278 M346 1262 L350 1280 L368 1280 Q340 1306 346 1316 Q380 1318 402 1300 M286 1388 Q330 1360 370 1330 M262 1342 L285 1304',
  'M200 1392 Q196 1370 206 1368 Q214 1374 202 1392 M210 1388 Q220 1376 222 1388 M194 1414 C192 1398 214 1396 224 1418 L240 1450 M408 1378 A13 13 0 1 1 432 1376 L440 1380 L432 1384 M410 1388 C388 1390 390 1410 404 1416 C424 1424 444 1412 434 1392 M402 1408 Q414 1406 416 1394 M404 1420 V1426 M416 1420 V1426',
  'M288 1438 Q290 1430 344 1414 Q350 1416 350 1446 Q346 1458 306 1470 Q300 1474 288 1438 M344 1416 L318 1446 L290 1438 M318 1446 Q308 1440 318 1432 Q326 1424 330 1440 Q340 1446 322 1460',
  'M432 1500 C430 1470 420 1448 440 1430 C460 1432 470 1456 460 1478 Q448 1494 428 1506 M442 1444 Q440 1430 446 1436 L450 1436 Q446 1446 442 1440 M396 1514 L376 1500 Q360 1484 364 1472 Q376 1466 390 1512 M396 1486 Q400 1472 414 1488 Q424 1500 410 1506 L398 1492',
  'M480 1402 C472 1430 500 1466 540 1440 Q550 1424 536 1404 M484 1396 Q494 1386 504 1400 Q510 1392 522 1400 Q540 1402 544 1366 Q560 1356 560 1384 Q568 1404 538 1402 M490 1412 Q500 1402 514 1414 L528 1404 Q536 1428 514 1424 Q500 1428 490 1412',
  'M590 1246 Q620 1276 650 1278 Q670 1276 676 1286 Q664 1292 640 1280 Q618 1270 590 1246 M660 1250 L696 1264 Q700 1274 680 1272 Z M500 1272 Q530 1284 530 1312 Q516 1326 490 1316 M504 1292 A4 4 0 1 0 512 1292 A4 4 0 1 0 504 1292 M506 1310 A4 4 0 1 0 514 1310 A4 4 0 1 0 506 1310',
  'M610 1352 C604 1320 620 1314 628 1322 Q640 1314 648 1326 Q660 1326 656 1342 Q664 1358 648 1368 Q616 1378 610 1352 M628 1322 L624 1340 M620 1352 Q626 1364 648 1356 M640 1324 L634 1340',
  'M700 1322 C696 1328 704 1338 710 1330 Q720 1336 718 1324 L738 1310 Q750 1316 750 1304 Q756 1294 744 1294 Q738 1286 734 1296 Q732 1304 714 1314 Q706 1312 700 1322',
  'M780 1310 Q776 1298 790 1304 C812 1310 824 1326 832 1344 M780 1310 C780 1330 796 1350 808 1356 M796 1304 Q802 1318 818 1320 M808 1356 Q810 1340 832 1344 M810 1360 Q830 1360 836 1376 M822 1354 L842 1374 M830 1346 L844 1364',
  'M738 1402 C730 1376 760 1364 772 1384 L774 1400 Q760 1406 738 1402 M746 1408 Q760 1406 762 1430 M756 1404 Q764 1420 778 1434 M766 1402 Q776 1412 790 1428 M774 1398 Q788 1420 806 1420',
  'M608 1418 Q604 1398 622 1404 Q638 1392 640 1408 Q640 1422 626 1430 Q612 1430 608 1418 M602 1480 C596 1460 620 1450 640 1460 C660 1448 690 1460 672 1480 Q668 1494 656 1500 M602 1480 Q596 1500 606 1506 M684 1466 Q692 1450 708 1460 Q716 1474 696 1474 Z',
  'M954 1262 L972 1250 M948 1272 Q944 1280 956 1280 Q962 1292 970 1280 M872 1336 Q880 1310 906 1298 L972 1316 M872 1336 L960 1372 L972 1366 M884 1344 L914 1300 M950 1312 L940 1336 L934 1358 L922 1346 L932 1338 L924 1324 L928 1316 L950 1312 M890 1296 Q896 1286 904 1290 Q900 1300 890 1298 M878 1324 L896 1332 M888 1308 L908 1316',
  'M837 1414 Q836 1408 848 1402 C890 1384 944 1426 936 1484 Q930 1490 920 1482 L872 1464 Q852 1448 837 1414 M846 1410 C880 1396 926 1430 924 1482 M872 1464 L874 1408 M872 1464 L922 1432 M856 1430 A12 12 0 1 0 880 1430 A12 12 0 1 0 856 1430 M888 1420 Q892 1412 898 1420 Q900 1430 888 1426Z M904 1456 Q912 1450 914 1460 Q912 1466 904 1462Z',
  'M822 1516 C828 1480 870 1484 872 1514 Q872 1530 866 1540 L872 1556 Q868 1568 854 1560 L850 1544 M854 1552 L870 1546 M846 1512 L850 1504 L856 1512 L862 1504 L866 1532 M808 1494 L814 1496 M828 1480 L830 1484 M848 1474 L850 1478 M868 1482 L872 1478',
  'M906 1568 A22 22 0 1 1 950 1564 A22 22 0 1 1 906 1568 M914 1566 A14 14 0 1 0 940 1560 Q932 1550 922 1562 Q922 1572 932 1570 M944 1578 L972 1594 M950 1574 L972 1586',
  'M806 1620 A26 26 0 1 0 856 1606 M822 1612 A14 14 0 1 0 846 1606 M130 1510 A26 26 0 0 1 168 1508 M144 1502 L150 1512 M200 1510 A11 11 0 1 1 222 1512 M196 1508 L202 1509 M280 1512 Q300 1500 320 1514 M12 1556 Q16 1536 26 1544 M0 1590 L18 1604 Q22 1612 12 1612 L0 1606 M116 1622 L130 1640 M150 1622 L160 1640 M200 1620 L206 1640 M220 1620 L222 1640 M240 1620 L242 1640 M346 1636 Q352 1616 364 1622 L378 1638 M640 1622 L632 1636 M702 1622 Q700 1630 702 1638 M490 1496 Q500 1482 524 1512 M498 1490 L540 1512',
];

const DoodleSet = () => (
  <g id="doodles" fill="none" strokeWidth="2" strokeLinecap="round" strokeLinejoin="round">
    {doodles.map((d, i) => (
      <path key={i} d={d} />
    ))}
    {rings.map(([x, y], i) => (
      <circle key={i} cx={x} cy={y} r="3.300" />
    ))}
    {spirals.map(([x, y], i) => (
      <path key={i} d={`M${x - 3} ${y + 2} Q${x} ${y + 5} ${x + 3} ${y} Q${x + 2} ${y - 6} ${x - 4} ${y - 4} Q${x - 10} ${y + 2} ${x - 4} ${y + 8} Q${x + 6} ${y + 12} ${x + 10} ${y} Q${x + 10} ${y - 8} ${x + 4} ${y - 10}`} />
    ))}
    {stars.map(([x, y, r], i) => (
      <path key={i} d={starPath(x, y, r)} />
    ))}
  </g>
);

const ChatWallpaper = () => (
  <Wallpaper width="972" height="1800" viewBox="0 203 972 1800">
    <defs>
      <clipPath id="upperArea">
        <rect x="0" y="203" width="972" height="1020" />
      </clipPath>
      <clipPath id="lowerArea">
        <rect x="0" y="1223" width="972" height="780" />
      </clipPath>
      <linearGradient id="ink" gradientUnits="userSpaceOnUse" x1="0" x2="972" y1="0" y2="0">
        <stop offset="0" stopColor="#1e2c38" />
        <stop offset="1" stopColor="#202b3c" />
      </linearGradient>
      <DoodleSet />
    </defs>
    <g clipPath="url(#upperArea)" stroke="url(#ink)">
      <use href="#doodles" />
    </g>
    <g clipPath="url(#lowerArea)" stroke="url(#ink)">
      <use href="#doodles" y="367" />
    </g>
  </Wallpaper>
);

/* ---------- page ---------- */

export default function App() {
  return (
    <Screen>
      <GlobalStyle />
      <TopArea>
        <StatusBar>
          <StatusGroup>
            <StatusText $after={11}>05:59</StatusText>
            <StatusLeftIcons />
          </StatusGroup>
          <StatusGroup>
            <BluetoothMute />
            <StackedLabel $w={40} $after={6} $size={16.6}>
              <span>Vo))</span>
              <span>LTE2</span>
            </StackedLabel>
            <StackedLabel $w={28} $after={9} $size={16}>
              <span>4G+</span>
              <DataArrows />
            </StackedLabel>
            <SignalBars />
            <StatusText $after={4}>10%</StatusText>
            <Battery />
          </StatusGroup>
        </StatusBar>
        <TitleBar>
          <BackArrow />
          <Avatar />
          <TitleText>
            <Title>FiLot - Powered by AI</Title>
            <Subtitle>bot</Subtitle>
          </TitleText>
          <MoreDots />
        </TitleBar>
      </TopArea>

      <Chat>
        <ChatWallpaper />
        <HeaderEdge />

        <SentBubble $w={342} $h={77} $after={16} $color="#8a4ab2">
          <Line>
            <InlineEmoji $drop={-11}><GreenCircle /></InlineEmoji> Stable
          </Line>
          <Stamp $right={67} $color="#fff">05:57</Stamp>
          <DoubleTick />
          <Tail right color="#8a4ab2" />
        </SentBubble>

        <Bubble $w={837} $h={429} $after={9} $corner={14}>
          <Line><InlineEmoji><Bag /></InlineEmoji><b> Ready to Invest? </b><InlineEmoji><Bag /></InlineEmoji></Line>
          <Line />
          <Line>With our One-Touch interface, simply select an</Line>
          <Line>investment amount below or choose 'Custom</Line>
          <Line>Amount' to enter a specific value.</Line>
          <Line />
          <Line><InlineEmoji><Bulb /></InlineEmoji><b> Tip:</b> All investment options can be</Line>
          <Line>managed through our convenient buttons - no</Line>
          <Line>typing required!</Line>
          <Stamp $right={26}>05:57</Stamp>
          <Tail />
        </Bubble>

        <Keyboard $w={836} $after={19}>
          <KeyRow>
            <Key>$50</Key>
            <Key>$100</Key>
            <Key>$250</Key>
          </KeyRow>
          <KeyRow>
            <Key>$500</Key>
            <Key>$1,000</Key>
            <Key>$5,000</Key>
          </KeyRow>
          <KeyRow>
            <Key $endLeft $endRight>Custom Amount</Key>
          </KeyRow>
        </Keyboard>

        <Bubble $w={752} $h={121} $after={16}>
          <Line><InlineEmoji><HandDown /></InlineEmoji><b> Remember:</b> You can always use these</Line>
          <Line>buttons for quick navigation! <InlineEmoji><HandDown /></InlineEmoji></Line>
          <Stamp $right={26}>05:57</Stamp>
          <Tail />
        </Bubble>

        <SentBubble $w={375} $h={77} $after={16} $color="#7a45c8">
          <Line>
            <InlineEmoji $drop={-11}><Person /></InlineEmoji> Account
          </Line>
          <Stamp $right={67} $color="#fff">05:58</Stamp>
          <DoubleTick />
          <Tail right color="#7a45c8" />
        </SentBubble>

        <Bubble $w={809} $h={296} $after={10} $corner={14}>
          <Line><InlineEmoji><Exclamation /></InlineEmoji><b> Account Access Error</b></Line>
          <Line />
          <Line>Sorry, an error occurred while accessing your</Line>
          <Line>account information.</Line>
          <Line />
          <Line>Please select an option to continue:</Line>
          <Stamp $right={26}>05:58</Stamp>
          <Tail />
        </Bubble>

        <Keyboard $w={808} $after={19}>
          <KeyRow>
            <Key><Bag size={42} />Invest</Key>
          </KeyRow>
          <KeyRow>
            <Key $endLeft><Magnifier size={42} />Explore</Key>
            <Key $endRight><Person size={42} />Account</Key>
          </KeyRow>
        </Keyboard>

        <Bubble $w={828} $h={110} $after={0}>
          <Line>Or use these persistent buttons for navigation:</Line>
          <Stamp $right={26}>05:58</Stamp>
          <Tail />
        </Bubble>
      </Chat>

      <Composer>
        <MenuButton aria-label="Menu"><Hamburger /></MenuButton>
        <StickerIcon />
        <Placeholder>Message</Placeholder>
        <ComposerIcons />
      </Composer>

      <ReplyPanel>
        <ReplyRow>
          <ReplyKey><Bag />Invest</ReplyKey>
        </ReplyRow>
        <ReplyRow>
          <ReplyKey><Magnifier />Explore</ReplyKey>
          <ReplyKey><Person />Account</ReplyKey>
        </ReplyRow>
      </ReplyPanel>
    </Screen>
  );
}
